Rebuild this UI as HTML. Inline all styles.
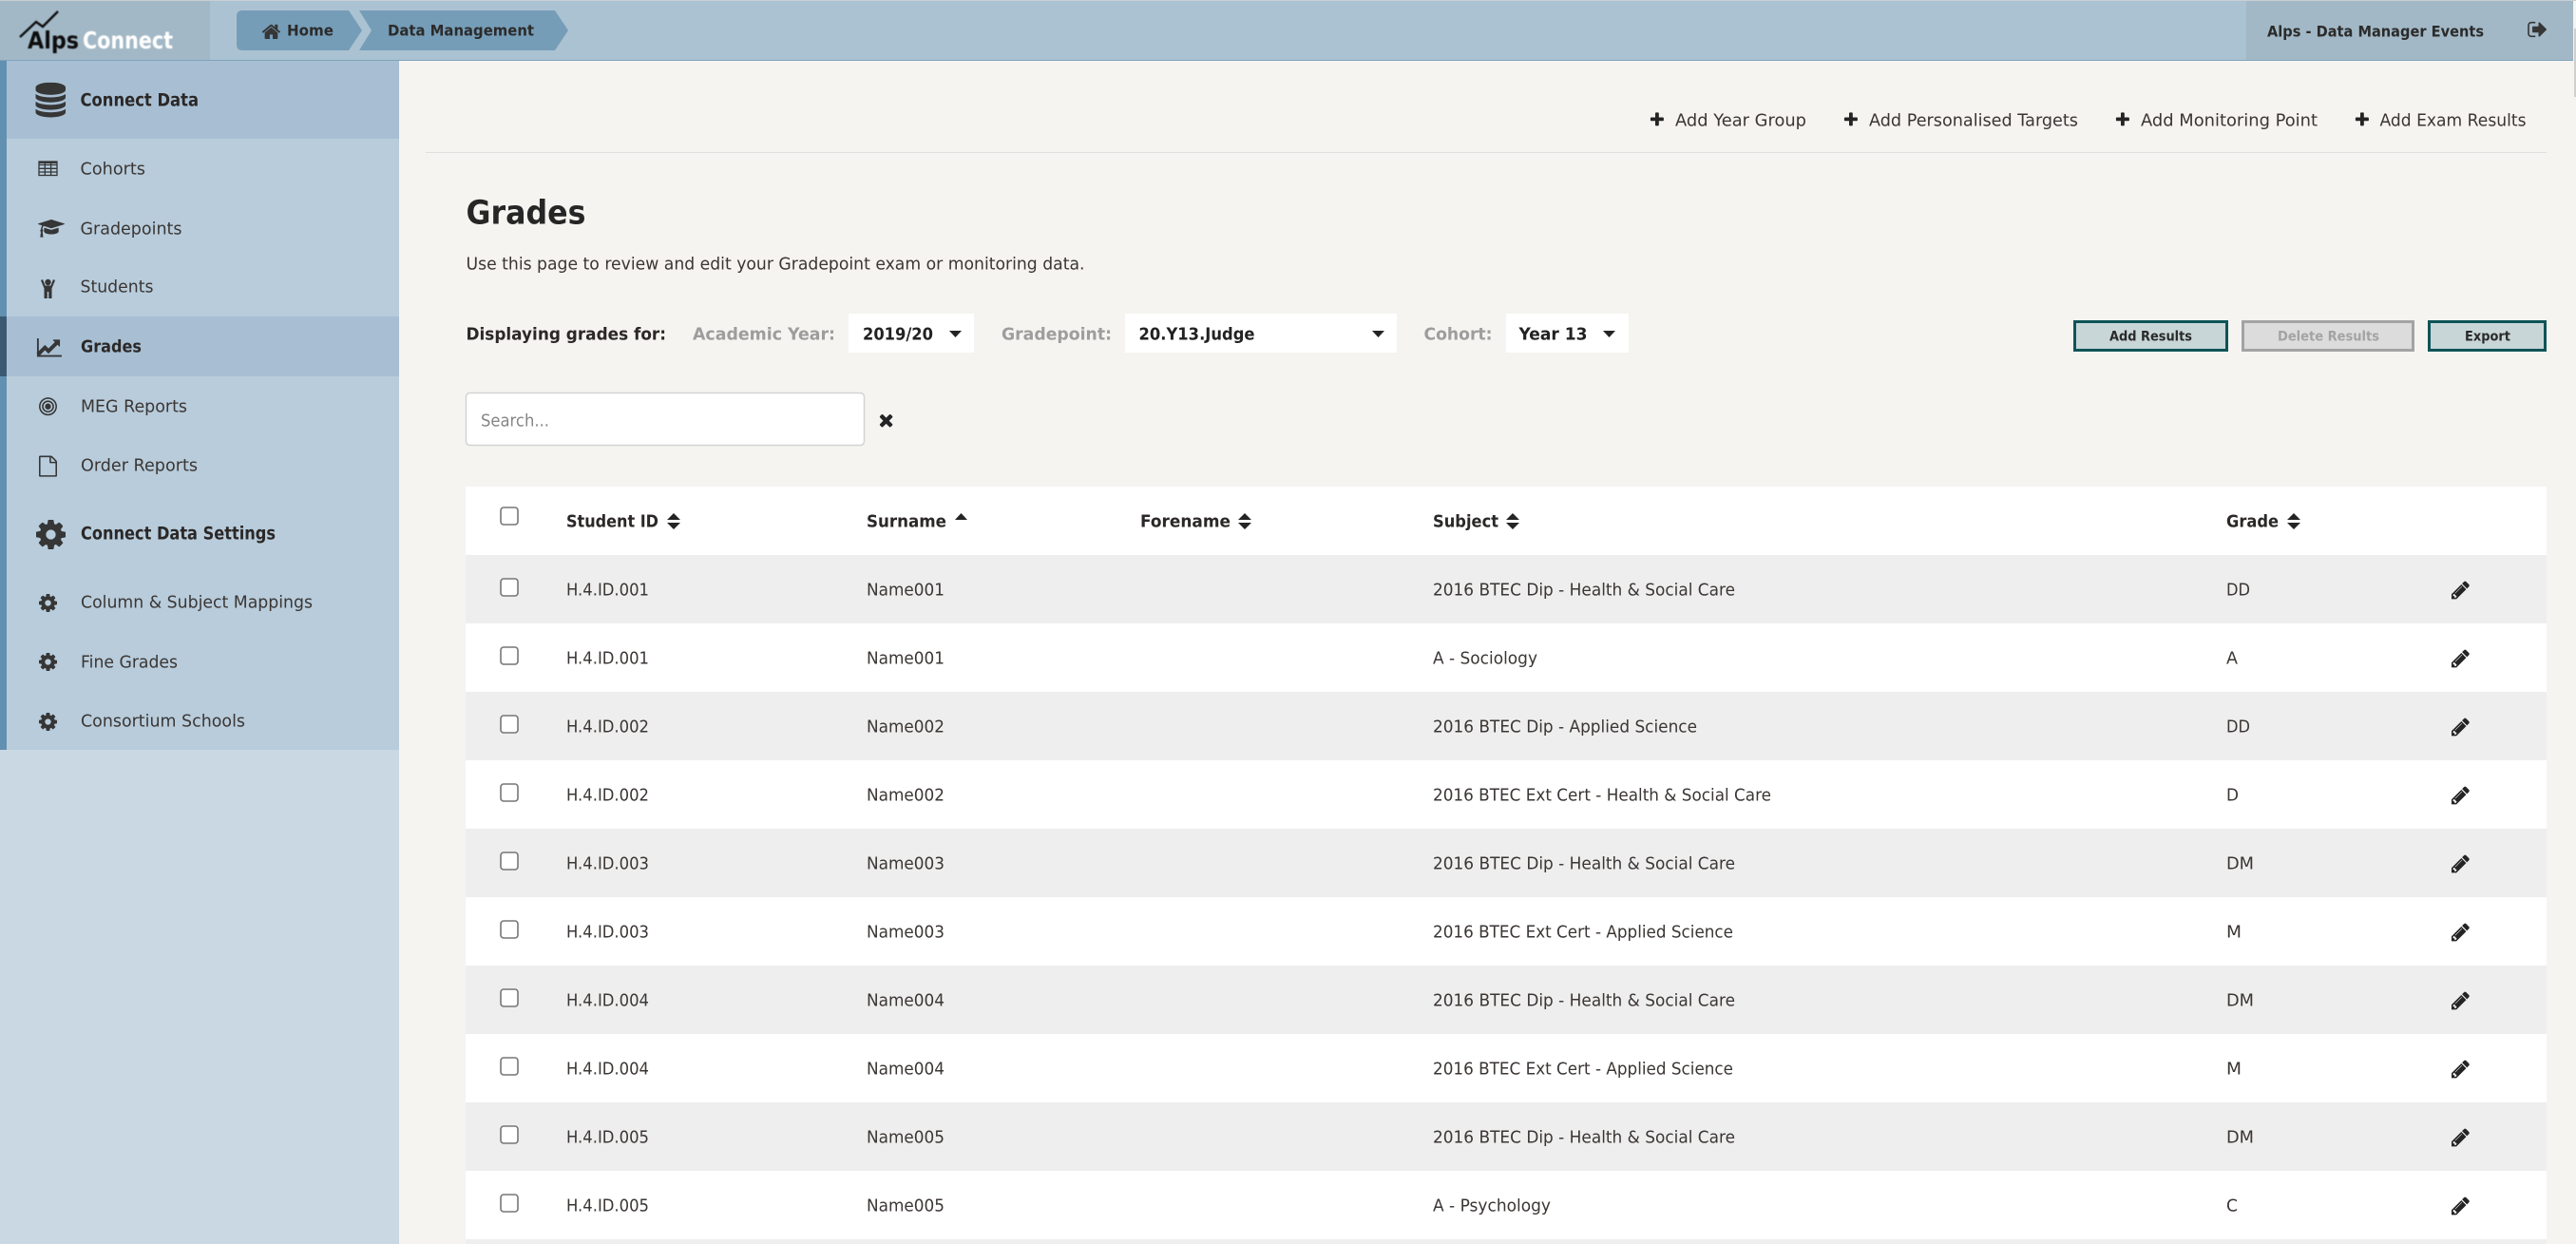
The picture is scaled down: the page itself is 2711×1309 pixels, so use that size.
<!DOCTYPE html>
<html lang="en"><head><meta charset="utf-8"><title>Grades - Alps Connect</title>
<style>
html,body{margin:0;padding:0;background:#f5f4f0;width:2711px;height:1309px;overflow:hidden}
svg{display:block}
text{font-family:"DejaVu Sans","Liberation Sans",sans-serif;font-size:18px;fill:#3b3634;transform:translateY(-.7px)}
.b{font-weight:700;fill:#2b2827}
.g{font-weight:700;fill:#9d9d9d}
.n{font-size:18px}
.h{font-size:16px;font-weight:700;fill:#2b2b2b}
.s{font-size:14.5px;font-weight:700;fill:#2a2a2a}
.i{fill:#363636}
.k{fill:#fff;stroke:#777;stroke-width:1.6}
.d{fill:#242424}
</style></head><body>
<svg xmlns="http://www.w3.org/2000/svg" width="2711" height="1309" viewBox="0 0 2711 1309">
<defs>
<filter id="bl"><feGaussianBlur stdDeviation=".5"/></filter>
<symbol id="pen" viewBox="0 0 1792 1792"><path d="M491 1536l91-91-235-235-91 91v107h128v128h107zm523-928q0-22-22-22-10 0-17 7l-542 542q-7 7-7 17 0 22 22 22 10 0 17-7l542-542q7-7 7-17zm-54-192l416 416-832 832h-416v-416zm683 96q0 53-37 90l-166 166-416-416 166-165q36-38 90-38 53 0 91 38l235 234q37 39 37 91z"/></symbol>
<symbol id="cog" viewBox="0 0 1792 1792"><path d="M1152 896q0-106-75-181t-181-75-181 75-75 181 75 181 181 75 181-75 75-181zm512-109v222q0 12-8 23t-20 13l-185 28q-19 54-39 91 35 50 107 138 10 12 10 25t-9 23q-27 37-99 108t-94 71q-12 0-26-9l-138-108q-44 23-91 38-16 136-29 186-7 28-36 28h-222q-14 0-24.500-8.500t-11.500-21.500l-28-184q-49-16-90-37l-141 107q-10 9-25 9-14 0-25-11-126-114-165-168-7-10-7-23 0-12 8-23 15-21 51-66.500t54-70.500q-27-50-41-99l-183-27q-13-2-21-12.500t-8-23.500v-222q0-12 8-23t19-13l186-28q14-46 39-92-40-57-107-138-10-12-10-24 0-10 9-23 26-36 98.500-107.500t94.500-71.500q13 0 26 10l138 107q44-23 91-38 16-136 29-186 7-28 36-28h222q14 0 24.500 8.500t11.500 21.500l28 184q49 16 90 37l142-107q9-9 24-9 13 0 25 10 129 119 165 170 7 8 7 22 0 12-8 23-15 21-51 66.500t-54 70.500q26 50 41 98l183 28q13 2 21 12.500t8 23.500z"/></symbol>
<symbol id="plus" viewBox="0 0 1792 1792"><path d="M1600 736v192q0 40-28 68t-68 28h-416v416q0 40-28 68t-68 28h-192q-40 0-68-28t-28-68v-416h-416q-40 0-68-28t-28-68v-192q0-40 28-68t68-28h416v-416q0-40 28-68t68-28h192q40 0 68 28t28 68v416h416q40 0 68 28t28 68z"/></symbol>
</defs>

<!-- header -->
<rect x="0" y="0" width="2708" height="64" fill="#abc2d2"/>
<rect x="0" y="0" width="2711" height="1" fill="#c9cfd1"/>
<rect x="0" y="1" width="221" height="62" fill="#a2b8c6"/>
<rect x="2364" y="1" width="344" height="62" fill="#a2b8c6"/>
<rect x="0" y="63" width="2708" height="1" fill="#7fa3bb"/>
<g filter="url(#bl)">
<polyline points="21,39 38,23 45,28 61,12" fill="none" stroke="#111" stroke-width="2.400"/>
<text x="29" y="51.500" textLength="54" lengthAdjust="spacingAndGlyphs" style="font-size:25px;font-weight:700;fill:#0c0c0c">Alps</text>
<text x="87" y="51.500" textLength="95" lengthAdjust="spacingAndGlyphs" style="font-size:25px;font-weight:700;fill:#fff">Connect</text>
</g>
<path d="M249 17q0-6 6-6H367L381 32 367 53H255q-6 0-6-6Z" fill="#769db8"/>
<path d="M378 11H584L598 32 584 53H378L391 32Z" fill="#769db8"/>
<svg x="274.800" y="22.700" width="21.300" height="21.300" viewBox="0 0 1792 1792" class="i"><path d="M1472 992v480q0 26-19 45t-45 19h-384v-384h-256v384h-384q-26 0-45-19t-19-45v-480q0-1 .5-3t.5-3l575-474 575 474q1 2 1 6zm223-69l-62 74q-8 9-21 11h-3q-13 0-21-7l-692-577-692 577q-12 8-24 7-13-2-21-11l-62-74q-8-10-7-23.500t11-21.500l719-599q32-26 76-26t76 26l244 204v-195q0-14 9-23t23-9h192q14 0 23 9t9 23v408l219 182q10 8 11 21.500t-7 23.500z"/></svg>
<text class="h" x="302" y="38" textLength="49" lengthAdjust="spacingAndGlyphs">Home</text>
<text class="h" x="408" y="38" textLength="154" lengthAdjust="spacingAndGlyphs">Data Management</text>
<text class="h" x="2386" y="39" textLength="228" lengthAdjust="spacingAndGlyphs">Alps - Data Manager Events</text>
<svg x="2659.400" y="19.700" width="22.600" height="22.600" viewBox="0 0 1792 1792" class="i"><path d="M704 1440q0 4 1 20t.5 26.500-3 23.500-10 19.500-20.500 6.500h-320q-119 0-203.500-84.500t-84.500-203.500v-704q0-119 84.500-203.500t203.500-84.500h320q13 0 22.500 9.500t9.500 22.500q0 4 1 20t.5 26.500-3 23.500-10 19.500-20.500 6.500h-320q-66 0-113 47t-47 113v704q0 66 47 113t113 47h312l11.500 1 11.500 3 8 5.500 7 9 2 13.500zm928-544q0 26-19 45l-544 544q-19 19-45 19t-45-19-19-45v-288h-448q-26 0-45-19t-19-45v-384q0-26 19-45t45-19h448v-288q0-26 19-45t45-19 45 19l544 544q19 19 19 45z"/></svg>
<rect x="2709" y="30" width="2" height="72" fill="#cfcfcf"/>

<!-- sidebar -->
<rect x="0" y="64" width="420" height="1245" fill="#c9d8e3"/>
<rect x="0" y="64" width="420" height="725" fill="#b8ccdb"/>
<rect x="0" y="64" width="7" height="725" fill="#6290b0"/>
<rect x="7" y="64" width="413" height="82" fill="#a8bfd3"/>
<rect x="7" y="333" width="413" height="63" fill="#a8bfd3"/>
<rect x="0" y="333" width="7" height="63" fill="#3a5a72"/>
<svg x="34.900" y="86.700" width="36.750" height="36.750" viewBox="0 0 1792 1792" class="i"><path d="M896 768q237 0 443-43t325-127v170q0 69-103 128t-280 93.500-385 34.500-385-34.500-280-93.500-103-128v-170q119 84 325 127t443 43zm0 768q237 0 443-43t325-127v170q0 69-103 128t-280 93.500-385 34.500-385-34.500-280-93.500-103-128v-170q119 84 325 127t443 43zm0-384q237 0 443-43t325-127v170q0 69-103 128t-280 93.500-385 34.500-385-34.500-280-93.500-103-128v-170q119 84 325 127t443 43zm0-1152q208 0 385 34.500t280 93.500 103 128v128q0 69-103 128t-280 93.500-385 34.500-385-34.500-280-93.500-103-128v-128q0-69 103-128t280-93.500 385-34.500z"/></svg>
<text class="b" x="84.500" y="112" textLength="124.500" lengthAdjust="spacingAndGlyphs" style="font-size:18.500px">Connect Data</text>
<g fill="none" stroke="#363636" stroke-width="1.300"><rect x="41" y="170" width="19" height="14.500"/><path d="M41 173.500H60M41 177.300H60M41 181H60M47.300 170V184.500M53.600 170V184.500"/></g>
<rect x="40.500" y="169.500" width="20" height="2.500" class="i"/>
<text class="n" x="84.500" y="184" textLength="68.500" lengthAdjust="spacingAndGlyphs">Cohorts</text>
<svg x="40" y="229.400" width="28" height="21.800" viewBox="0 0 2304 1792" class="i"><path d="M1774 836l18 316q4 69-82 128t-235 93.500-323 34.500-323-34.500-235-93.500-82-128l18-316 574 181q22 7 48 7t48-7zm530-324q0 23-22 31l-1120 352q-4 1-10 1t-10-1l-652-206q-43 34-71 111.500t-34 178.500q63 36 63 109 0 69-58 107l58 433q2 14-8 25-9 11-24 11h-192q-15 0-24-11-10-11-8-25l58-433q-58-38-58-107 0-73 65-111 11-207 98-330l-333-104q-22-8-22-31t22-31l1120-352q4-1 10-1t10 1l1120 352q22 8 22 31z"/></svg>
<text class="n" x="84.500" y="247" textLength="107" lengthAdjust="spacingAndGlyphs">Gradepoints</text>
<g class="i"><circle cx="50.500" cy="297" r="3.200"/><path d="M43 295 45 294 47.500 300.500H53.500L56 294 58 295 54.500 303.500V314H51.200V307H49.800V314H46.500V303.500Z"/></g>
<text class="n" x="84.500" y="308" textLength="77" lengthAdjust="spacingAndGlyphs">Students</text>
<svg x="37.100" y="352.300" width="29.700" height="29.700" viewBox="0 0 2048 2048" class="i"><path d="M1920 1472v128h-1792v-1344h128v1216h1664zm-128-1088v435q0 21-19.500 29.500t-35.500-7.500l-121-121-633 633q-10 10-23 10t-23-10l-233-233-416 416-192-192 585-585q10-10 23-10t23 10l233 233 464-464-121-121q-16-16-7.500-35.500t29.500-19.500h435q14 0 23 9t9 23z"/></svg>
<text class="b" x="85" y="371" textLength="64" lengthAdjust="spacingAndGlyphs">Grades</text>
<svg x="39.400" y="416.600" width="22.200" height="22.200" viewBox="0 0 1792 1792" class="i"><path d="M1152 896q0 106-75 181t-181 75-181-75-75-181 75-181 181-75 181 75 75 181zm128 0q0-159-112.500-271.500t-271.500-112.500-271.500 112.500-112.500 271.500 112.500 271.500 271.500 112.500 271.500-112.500 112.500-271.500zm128 0q0 212-150 362t-362 150-362-150-150-362 150-362 362-150 362 150 150 362zm128 0q0-130-51-248.500t-136.500-204-204-136.500-248.500-51-248.500 51-204 136.500-136.500 204-51 248.500 51 248.500 136.500 204 204 136.500 248.500 51 248.500-51 204-136.500 136.500-204 51-248.500zm128 0q0 209-103 385.500t-279.500 279.500-385.500 103-385.500-103-279.500-279.500-103-385.500 103-385.500 279.500-279.500 385.500-103 385.500 103 279.500 279.500 103 385.500z"/></svg>
<text class="n" x="85" y="434" textLength="112" lengthAdjust="spacingAndGlyphs">MEG Reports</text>
<svg x="39.400" y="479.500" width="22.200" height="22.200" viewBox="0 0 1792 1792" class="i"><path d="M1596 380q28 28 48 76t20 88v1152q0 40-28 68t-68 28h-1344q-40 0-68-28t-28-68v-1600q0-40 28-68t68-28h896q40 0 88 20t76 48zm-444-244v376h376q-10-29-22-41l-313-313q-12-12-41-22zm384 1528v-1024h-416q-40 0-68-28t-28-68v-416h-768v1536h1280z"/></svg>
<text class="n" x="85" y="496" textLength="123" lengthAdjust="spacingAndGlyphs">Order Reports</text>
<use href="#cog" x="35.400" y="544.400" width="36.200" height="36.200" class="i"/>
<text class="b" x="85" y="568" textLength="205" lengthAdjust="spacingAndGlyphs" style="font-size:18.500px">Connect Data Settings</text>
<use href="#cog" x="39.400" y="623.400" width="22.200" height="22.200" class="i"/>
<text class="n" x="85" y="640" textLength="244" lengthAdjust="spacingAndGlyphs">Column &amp; Subject Mappings</text>
<use href="#cog" x="39.400" y="685.400" width="22.200" height="22.200" class="i"/>
<text class="n" x="85" y="703" textLength="102" lengthAdjust="spacingAndGlyphs">Fine Grades</text>
<use href="#cog" x="39.400" y="748.400" width="22.200" height="22.200" class="i"/>
<text class="n" x="85" y="765" textLength="173" lengthAdjust="spacingAndGlyphs">Consortium Schools</text>

<!-- top actions -->
<use href="#plus" x="1735" y="117.100" width="17.800" height="17.800" class="d"/>
<text x="1763" y="133" textLength="138" lengthAdjust="spacingAndGlyphs">Add Year Group</text>
<use href="#plus" x="1939" y="117.100" width="17.800" height="17.800" class="d"/>
<text x="1967" y="133" textLength="220" lengthAdjust="spacingAndGlyphs">Add Personalised Targets</text>
<use href="#plus" x="2225" y="117.100" width="17.800" height="17.800" class="d"/>
<text x="2253" y="133" textLength="186" lengthAdjust="spacingAndGlyphs">Add Monitoring Point</text>
<use href="#plus" x="2477" y="117.100" width="17.800" height="17.800" class="d"/>
<text x="2504.500" y="133" textLength="154" lengthAdjust="spacingAndGlyphs">Add Exam Results</text>
<rect x="448" y="160" width="2232" height="1" fill="#dfdfdf"/>

<!-- title -->
<text class="b" x="490.500" y="236" textLength="126" lengthAdjust="spacingAndGlyphs" style="font-size:34.500px;fill:#262626">Grades</text>
<text x="490.500" y="284" textLength="651" lengthAdjust="spacingAndGlyphs" style="font-size:17.500px">Use this page to review and edit your Gradepoint exam or monitoring data.</text>

<!-- filters -->
<text class="b" x="490.500" y="358" textLength="210.500" lengthAdjust="spacingAndGlyphs">Displaying grades for:</text>
<text class="g" x="729" y="358" textLength="150" lengthAdjust="spacingAndGlyphs">Academic Year:</text>
<rect x="893" y="330" width="132" height="41" fill="#fff"/>
<text class="b" x="908" y="358" textLength="74" lengthAdjust="spacingAndGlyphs" style="fill:#222">2019/20</text>
<path d="M999 348h13l-6.500 7z" class="d"/>
<text class="g" x="1054" y="358" textLength="116" lengthAdjust="spacingAndGlyphs">Gradepoint:</text>
<rect x="1184" y="330" width="286" height="41" fill="#fff"/>
<text class="b" x="1198.500" y="358" textLength="122" lengthAdjust="spacingAndGlyphs" style="fill:#222">20.Y13.Judge</text>
<path d="M1444 348h13l-6.500 7z" class="d"/>
<text class="g" x="1498.500" y="358" textLength="72" lengthAdjust="spacingAndGlyphs">Cohort:</text>
<rect x="1585" y="330" width="129" height="41" fill="#fff"/>
<text class="b" x="1598.500" y="358" textLength="72" lengthAdjust="spacingAndGlyphs" style="fill:#222">Year 13</text>
<path d="M1687 348h13l-6.500 7z" class="d"/>

<!-- buttons -->
<rect x="2183.500" y="338.500" width="160" height="30" fill="#c8d6d8" stroke="#0f5459" stroke-width="3"/>
<text class="s" x="2220" y="359" textLength="87" lengthAdjust="spacingAndGlyphs">Add Results</text>
<rect x="2360.500" y="338.500" width="179" height="30" fill="#dcdcdc" stroke="#a3a3a3" stroke-width="3"/>
<text class="s" x="2397" y="359" textLength="107" lengthAdjust="spacingAndGlyphs" style="fill:#a3a3a3">Delete Results</text>
<rect x="2556.500" y="338.500" width="122" height="30" fill="#c8d6d8" stroke="#0f5459" stroke-width="3"/>
<text class="s" x="2594" y="359" textLength="48" lengthAdjust="spacingAndGlyphs">Export</text>

<!-- search -->
<rect x="490.500" y="413.500" width="419" height="55" rx="4" fill="#fff" stroke="#d4d4d4" stroke-width="1.500"/>
<text x="506" y="449" textLength="72" lengthAdjust="spacingAndGlyphs" style="font-size:18px;fill:#858585">Search...</text>
<svg x="922.400" y="431.800" width="20.400" height="20.400" viewBox="0 0 1792 1792" class="d"><path d="M1490 1322q0 40-28 68l-136 136q-28 28-68 28t-68-28l-294-294-294 294q-28 28-68 28t-68-28l-136-136q-28-28-28-68t28-68l294-294-294-294q-28-28-28-68t28-68l136-136q28-28 68-28t68 28l294 294 294-294q28-28 68-28t68 28l136 136q28 28 28 68t-28 68l-294 294 294 294q28 28 28 68z"/></svg>

<!-- table header -->
<rect x="490" y="512" width="2190" height="72" fill="#fff"/>
<rect class="k" x="527" y="534" width="18" height="18" rx="3"/>
<text class="b" x="596" y="555" textLength="97" lengthAdjust="spacingAndGlyphs">Student ID</text>
<path d="M702 547h14l-7-7zM702 550h14l-7 7z" class="d"/>
<text class="b" x="912" y="555" textLength="84" lengthAdjust="spacingAndGlyphs">Surname</text>
<path d="M1005 547h13l-6.500-7z" class="d"/>
<text class="b" x="1200" y="555" textLength="95" lengthAdjust="spacingAndGlyphs">Forename</text>
<path d="M1303 547h14l-7-7zM1303 550h14l-7 7z" class="d"/>
<text class="b" x="1508" y="555" textLength="69" lengthAdjust="spacingAndGlyphs">Subject</text>
<path d="M1585 547h14l-7-7zM1585 550h14l-7 7z" class="d"/>
<text class="b" x="2343" y="555" textLength="55" lengthAdjust="spacingAndGlyphs">Grade</text>
<path d="M2407 547h14l-7-7zM2407 550h14l-7 7z" class="d"/>

<!-- rows -->
<g transform="translate(0 584)"><rect x="490" width="2190" height="72" fill="#eee"/><rect class="k" x="527" y="25" width="18" height="18" rx="3"/><text x="596" y="43" textLength="87" lengthAdjust="spacingAndGlyphs">H.4.ID.001</text><text x="912" y="43" textLength="82" lengthAdjust="spacingAndGlyphs">Name001</text><text x="1508" y="43" textLength="318" lengthAdjust="spacingAndGlyphs">2016 BTEC Dip - Health &amp; Social Care</text><text x="2343" y="43" textLength="25" lengthAdjust="spacingAndGlyphs">DD</text><use href="#pen" x="2578.400" y="25.800" width="22.200" height="22.200" class="d"/></g>
<g transform="translate(0 656)"><rect x="490" width="2190" height="72" fill="#fff"/><rect class="k" x="527" y="25" width="18" height="18" rx="3"/><text x="596" y="43" textLength="87" lengthAdjust="spacingAndGlyphs">H.4.ID.001</text><text x="912" y="43" textLength="82" lengthAdjust="spacingAndGlyphs">Name001</text><text x="1508" y="43" textLength="110" lengthAdjust="spacingAndGlyphs">A - Sociology</text><text x="2343" y="43" textLength="12" lengthAdjust="spacingAndGlyphs">A</text><use href="#pen" x="2578.400" y="25.800" width="22.200" height="22.200" class="d"/></g>
<g transform="translate(0 728)"><rect x="490" width="2190" height="72" fill="#eee"/><rect class="k" x="527" y="25" width="18" height="18" rx="3"/><text x="596" y="43" textLength="87" lengthAdjust="spacingAndGlyphs">H.4.ID.002</text><text x="912" y="43" textLength="82" lengthAdjust="spacingAndGlyphs">Name002</text><text x="1508" y="43" textLength="278" lengthAdjust="spacingAndGlyphs">2016 BTEC Dip - Applied Science</text><text x="2343" y="43" textLength="25" lengthAdjust="spacingAndGlyphs">DD</text><use href="#pen" x="2578.400" y="25.800" width="22.200" height="22.200" class="d"/></g>
<g transform="translate(0 800)"><rect x="490" width="2190" height="72" fill="#fff"/><rect class="k" x="527" y="25" width="18" height="18" rx="3"/><text x="596" y="43" textLength="87" lengthAdjust="spacingAndGlyphs">H.4.ID.002</text><text x="912" y="43" textLength="82" lengthAdjust="spacingAndGlyphs">Name002</text><text x="1508" y="43" textLength="356" lengthAdjust="spacingAndGlyphs">2016 BTEC Ext Cert - Health &amp; Social Care</text><text x="2343" y="43" textLength="13" lengthAdjust="spacingAndGlyphs">D</text><use href="#pen" x="2578.400" y="25.800" width="22.200" height="22.200" class="d"/></g>
<g transform="translate(0 872)"><rect x="490" width="2190" height="72" fill="#eee"/><rect class="k" x="527" y="25" width="18" height="18" rx="3"/><text x="596" y="43" textLength="87" lengthAdjust="spacingAndGlyphs">H.4.ID.003</text><text x="912" y="43" textLength="82" lengthAdjust="spacingAndGlyphs">Name003</text><text x="1508" y="43" textLength="318" lengthAdjust="spacingAndGlyphs">2016 BTEC Dip - Health &amp; Social Care</text><text x="2343" y="43" textLength="29" lengthAdjust="spacingAndGlyphs">DM</text><use href="#pen" x="2578.400" y="25.800" width="22.200" height="22.200" class="d"/></g>
<g transform="translate(0 944)"><rect x="490" width="2190" height="72" fill="#fff"/><rect class="k" x="527" y="25" width="18" height="18" rx="3"/><text x="596" y="43" textLength="87" lengthAdjust="spacingAndGlyphs">H.4.ID.003</text><text x="912" y="43" textLength="82" lengthAdjust="spacingAndGlyphs">Name003</text><text x="1508" y="43" textLength="316" lengthAdjust="spacingAndGlyphs">2016 BTEC Ext Cert - Applied Science</text><text x="2343" y="43" textLength="16" lengthAdjust="spacingAndGlyphs">M</text><use href="#pen" x="2578.400" y="25.800" width="22.200" height="22.200" class="d"/></g>
<g transform="translate(0 1016)"><rect x="490" width="2190" height="72" fill="#eee"/><rect class="k" x="527" y="25" width="18" height="18" rx="3"/><text x="596" y="43" textLength="87" lengthAdjust="spacingAndGlyphs">H.4.ID.004</text><text x="912" y="43" textLength="82" lengthAdjust="spacingAndGlyphs">Name004</text><text x="1508" y="43" textLength="318" lengthAdjust="spacingAndGlyphs">2016 BTEC Dip - Health &amp; Social Care</text><text x="2343" y="43" textLength="29" lengthAdjust="spacingAndGlyphs">DM</text><use href="#pen" x="2578.400" y="25.800" width="22.200" height="22.200" class="d"/></g>
<g transform="translate(0 1088)"><rect x="490" width="2190" height="72" fill="#fff"/><rect class="k" x="527" y="25" width="18" height="18" rx="3"/><text x="596" y="43" textLength="87" lengthAdjust="spacingAndGlyphs">H.4.ID.004</text><text x="912" y="43" textLength="82" lengthAdjust="spacingAndGlyphs">Name004</text><text x="1508" y="43" textLength="316" lengthAdjust="spacingAndGlyphs">2016 BTEC Ext Cert - Applied Science</text><text x="2343" y="43" textLength="16" lengthAdjust="spacingAndGlyphs">M</text><use href="#pen" x="2578.400" y="25.800" width="22.200" height="22.200" class="d"/></g>
<g transform="translate(0 1160)"><rect x="490" width="2190" height="72" fill="#eee"/><rect class="k" x="527" y="25" width="18" height="18" rx="3"/><text x="596" y="43" textLength="87" lengthAdjust="spacingAndGlyphs">H.4.ID.005</text><text x="912" y="43" textLength="82" lengthAdjust="spacingAndGlyphs">Name005</text><text x="1508" y="43" textLength="318" lengthAdjust="spacingAndGlyphs">2016 BTEC Dip - Health &amp; Social Care</text><text x="2343" y="43" textLength="29" lengthAdjust="spacingAndGlyphs">DM</text><use href="#pen" x="2578.400" y="25.800" width="22.200" height="22.200" class="d"/></g>
<g transform="translate(0 1232)"><rect x="490" width="2190" height="72" fill="#fff"/><rect class="k" x="527" y="25" width="18" height="18" rx="3"/><text x="596" y="43" textLength="87" lengthAdjust="spacingAndGlyphs">H.4.ID.005</text><text x="912" y="43" textLength="82" lengthAdjust="spacingAndGlyphs">Name005</text><text x="1508" y="43" textLength="124" lengthAdjust="spacingAndGlyphs">A - Psychology</text><text x="2343" y="43" textLength="12" lengthAdjust="spacingAndGlyphs">C</text><use href="#pen" x="2578.400" y="25.800" width="22.200" height="22.200" class="d"/></g>
<rect x="490" y="1304" width="2190" height="5" fill="#eee"/>
</svg>
</body></html>
